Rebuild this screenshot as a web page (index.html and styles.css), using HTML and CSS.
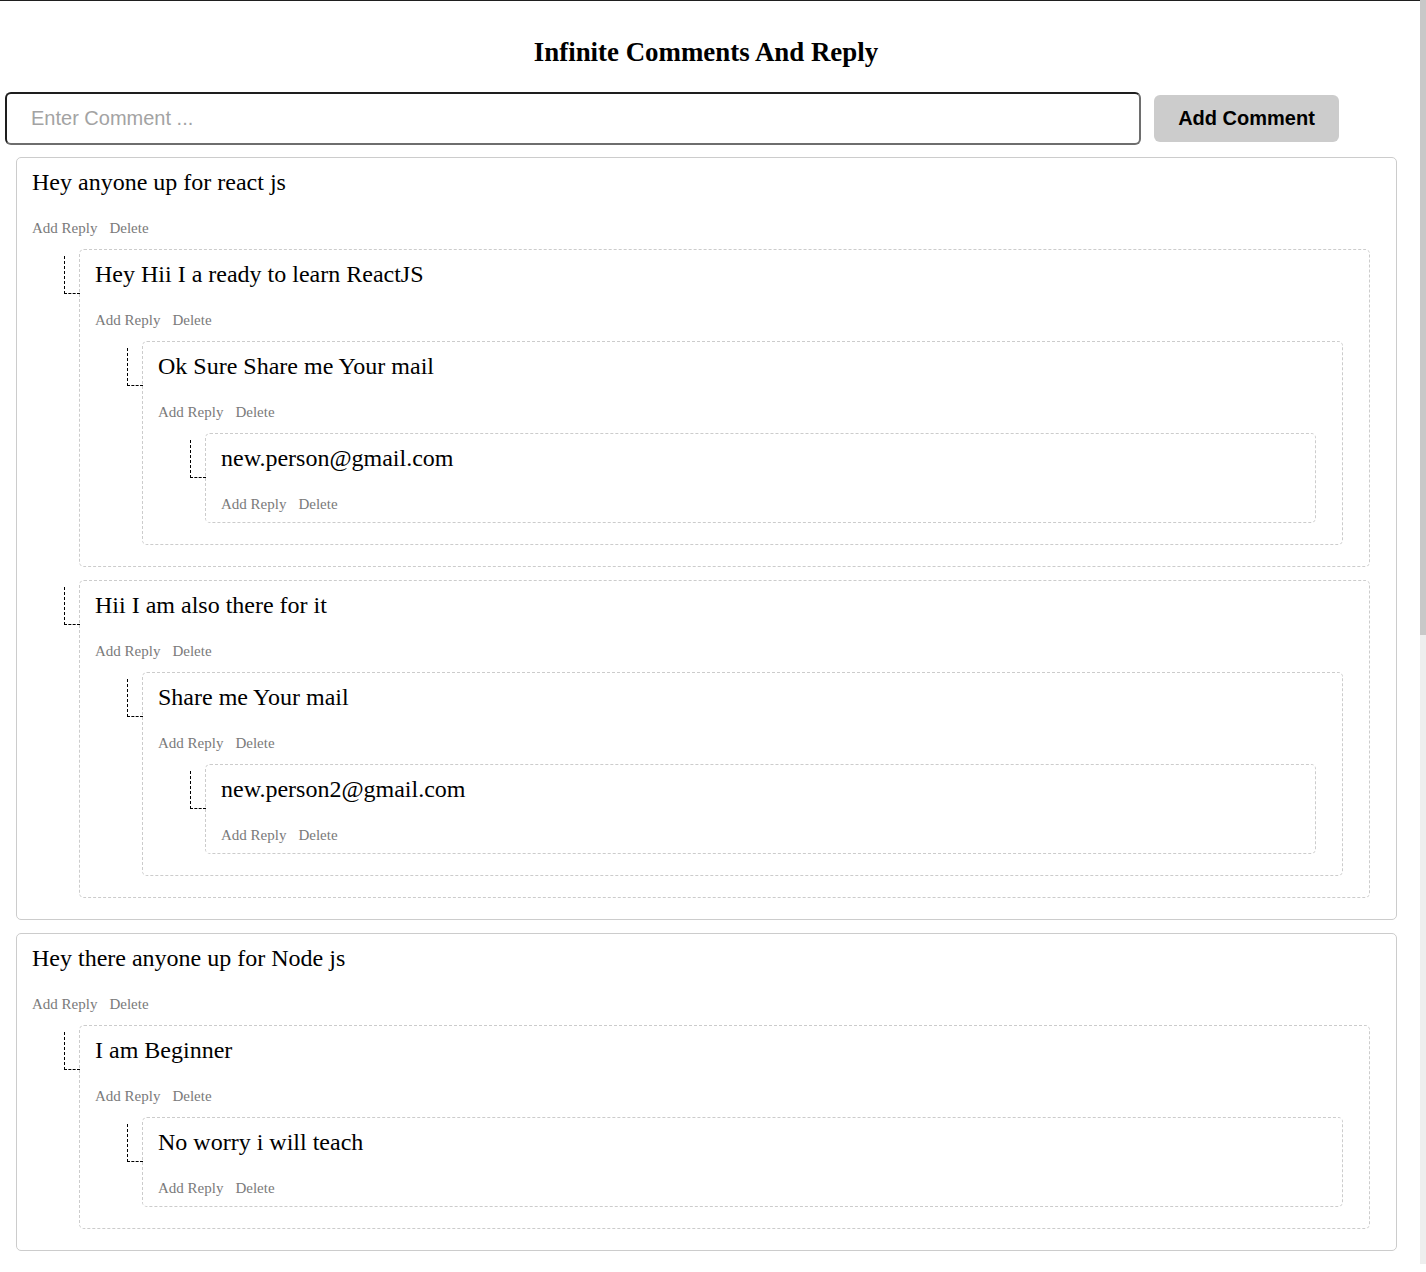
FILE: index.html
```html
<!DOCTYPE html>
<html lang="en">
<head>
<meta charset="utf-8">
<title>Infinite Comments And Reply</title>
<link rel="stylesheet" href="styles.css">
</head>
<body>
<div class="window">
<div class="page">
  <h1 class="title">Infinite Comments And Reply</h1>
  <div class="composer">
    <input class="comment-input" type="text" placeholder="Enter Comment ...">
    <button class="add-btn">Add Comment</button>
  </div>

  <div class="thread">
    <div class="card">
      <div class="text">Hey anyone up for react js</div>
      <div class="actions"><span>Add Reply</span><span>Delete</span></div>

      <div class="reply">
        <div class="text">Hey Hii I a ready to learn ReactJS</div>
        <div class="actions"><span>Add Reply</span><span>Delete</span></div>
        <div class="reply">
          <div class="text">Ok Sure Share me Your mail</div>
          <div class="actions"><span>Add Reply</span><span>Delete</span></div>
          <div class="reply">
            <div class="text">new.person@gmail.com</div>
            <div class="actions"><span>Add Reply</span><span>Delete</span></div>
          </div>
        </div>
      </div>

      <div class="reply">
        <div class="text">Hii I am also there for it</div>
        <div class="actions"><span>Add Reply</span><span>Delete</span></div>
        <div class="reply">
          <div class="text">Share me Your mail</div>
          <div class="actions"><span>Add Reply</span><span>Delete</span></div>
          <div class="reply">
            <div class="text">new.person2@gmail.com</div>
            <div class="actions"><span>Add Reply</span><span>Delete</span></div>
          </div>
        </div>
      </div>
    </div>

    <div class="card">
      <div class="text">Hey there anyone up for Node js</div>
      <div class="actions"><span>Add Reply</span><span>Delete</span></div>
      <div class="reply">
        <div class="text">I am Beginner</div>
        <div class="actions"><span>Add Reply</span><span>Delete</span></div>
        <div class="reply">
          <div class="text">No worry i will teach</div>
          <div class="actions"><span>Add Reply</span><span>Delete</span></div>
        </div>
      </div>
    </div>
  </div>
</div>
<div class="scrollbar"><div class="scroll-thumb"></div></div>
</div>
</body>
</html>
```

FILE: styles.css
```css
html, body {
  margin: 0;
  padding: 0;
  background: #fff;
}

body {
  font-family: "Liberation Serif", "Times New Roman", serif;
  color: #000;
}

.window {
  display: flex;
  align-items: stretch;
}

.page {
  flex: 1;
  min-width: 0;
  border-top: 1px solid #1f1f1f;
}

.scrollbar {
  width: 6px;
  flex: 0 0 6px;
  background: #eeeeee;
}

.scroll-thumb {
  height: 635px;
  background: #c8c8c8;
}

.title {
  margin: 36px 8px 0 0;
  font-size: 26.9px;
  font-weight: bold;
  text-align: center;
  line-height: 31px;
}

.composer {
  display: flex;
  align-items: center;
  margin: 24px 0 0 5px;
}

.comment-input {
  box-sizing: border-box;
  width: 1136px;
  height: 53px;
  border-style: solid;
  border-width: 2px;
  border-color: #1e1e1e #6e6e6e #6e6e6e #1e1e1e;
  border-radius: 6px;
  padding: 0 20px 0 24px;
  font-family: "Liberation Sans", Arial, sans-serif;
  font-size: 20px;
  color: #000;
  outline: none;
}
.comment-input::placeholder {
  color: #a3a3a3;
}

.add-btn {
  box-sizing: border-box;
  margin-left: 13px;
  width: 185px;
  height: 47px;
  border: none;
  border-radius: 6px;
  background: #cccccc;
  font-family: "Liberation Sans", Arial, sans-serif;
  font-size: 20px;
  font-weight: bold;
  color: #000;
  padding: 0;
}

.thread {
  display: flow-root;
}

.card {
  margin: 12px 23px 13px 16px;
  border: 1px solid #cccccc;
  border-radius: 5px;
  padding: 10px 15px;
}

.text {
  font-size: 24px;
  padding-top: 1px;
  line-height: 26px;
}

.actions {
  display: flex;
  gap: 12px;
  margin-top: 25px;
  font-size: 15px;
  line-height: 16px;
  color: #7a7a7a;
}

.reply {
  position: relative;
  margin: 13px 11px 11px 47px;
  border: 1px dashed #cccccc;
  border-radius: 5px;
  padding: 10px 15px;
}

.reply::before {
  content: "";
  position: absolute;
  left: -16px;
  top: 6px;
  width: 15px;
  height: 37px;
  border-left: 1px dashed #000;
  border-bottom: 1px dashed #000;
}
```
